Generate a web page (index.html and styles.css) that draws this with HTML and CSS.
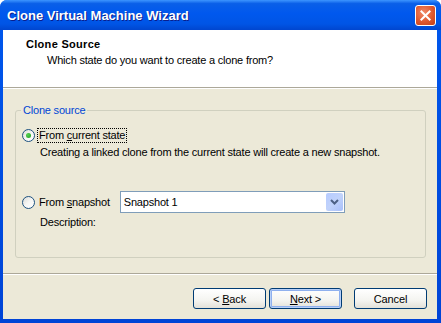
FILE: index.html
```html
<!DOCTYPE html>
<html lang="en">
<head>
    <meta charset="UTF-8">
    <title>Clone Virtual Machine Wizard</title>
    <link rel="stylesheet" href="styles.css">
</head>
<body>
    <div class="window">
        <div class="titlebar">
            <span class="title">Clone Virtual Machine Wizard</span>
            <span class="close-btn">
                <svg viewBox="0 0 21 21" width="21" height="21">
                    <path d="M6 6 L15 15 M15 6 L6 15" stroke="#fff" stroke-width="2.2" stroke-linecap="square"></path>
                </svg>
            </span>
        </div>
        <div class="client">
            <div class="header">
                <h1>Clone Source</h1>
                <p>Which state do you want to create a clone from?</p>
            </div>
            <div class="body">
                <fieldset class="group">
                    <legend>Clone source</legend>
                    <div class="option">
                        <span class="radio checked"></span>
                        <span class="label focused">From <u>c</u>urrent state</span>
                    </div>
                    <div class="hint">Creating a linked clone from the current state will create a new snapshot.</div>
                    <div class="option snap-row">
                        <span class="radio"></span>
                        <span class="label">From <u>s</u>napshot</span>
                        <div class="combo">
                            <span class="combo-text">Snapshot 1</span>
                            <span class="combo-btn">
                                <svg viewBox="0 0 9 6" width="9" height="6">
                                    <path d="M1 1 L4.5 4.5 L8 1" fill="none" stroke="#4D6185" stroke-width="2"></path>
                                </svg>
                            </span>
                        </div>
                    </div>
                    <div class="hint">Description:</div>
                </fieldset>
            </div>
            <div class="footer">
                <button class="btn">&lt; <u>B</u>ack</button>
                <button class="btn default"><u>N</u>ext &gt;</button>
                <button class="btn cancel">Cancel</button>
            </div>
        </div>
    </div>
</body>
</html>
```

FILE: styles.css
```css
* {
    margin: 0;
    padding: 0;
    box-sizing: border-box;
}

body {
    font-family: 'Liberation Sans', Arial, sans-serif;
    font-size: 11px;
    letter-spacing: -0.2px;
    color: #000;
    background: #fff;
}

.window {
    width: 441px;
    height: 323px;
    background: linear-gradient(180deg, #0058ee 0%, #0044d6 100%);
    border-radius: 7px 7px 0 0;
    padding: 0 4px 4px 3px;
    display: flex;
    flex-direction: column;
}

.titlebar {
    height: 30px;
    display: flex;
    align-items: center;
    justify-content: space-between;
    background: linear-gradient(180deg, #3d95ff 0%, #0a5fe8 12%, #0058ee 45%, #0055e5 80%, #0046cf 100%);
    margin: 0 -4px 0 -3px;
    padding-left: 7px;
    padding-right: 5px;
    border-radius: 7px 7px 0 0;
}

.title {
    color: #fff;
    font-weight: bold;
    font-size: 13px;
    letter-spacing: 0;
    text-shadow: 1px 1px 0 #0a1e8c;
    padding-top: 1px;
}

.close-btn {
    width: 21px;
    height: 21px;
    border: 1px solid #fff;
    border-radius: 3px;
    background: radial-gradient(circle at 40% 35%, #f08a6a 0%, #e0582e 55%, #c33e16 100%);
    display: flex;
    align-items: center;
    justify-content: center;
}

.close-btn svg {
    width: 19px;
    height: 19px;
}

.client {
    flex: 1;
    background: #ece9d8;
    display: flex;
    flex-direction: column;
}

.header {
    background: #fff;
    height: 58px;
    border-bottom: 1px solid #aca899;
    box-shadow: 0 1px 0 #fff;
    padding: 8px 0 0 23px;
}

.header h1 {
    font-size: 11px;
    font-weight: bold;
    letter-spacing: 0.3px;
    margin-bottom: 4px;
}

.header p {
    padding-left: 21px;
}

.body {
    padding: 16px 11px 0 12px;
    height: 186px;
    border-bottom: 1px solid #aca899;
    box-shadow: 0 1px 0 #fff;
}

.group {
    border: 1px solid #d0d0bf;
    border-radius: 3px;
    height: 154px;
    padding: 12px 0 0 6px;
}

.group legend {
    color: #0046d5;
    padding: 0 2px;
    margin-left: -1px;
}

.option {
    display: flex;
    align-items: center;
    height: 15px;
}

.radio {
    width: 13px;
    height: 13px;
    border: 1px solid #1c5180;
    border-radius: 50%;
    background: linear-gradient(135deg, #dcdcd6 0%, #f6f6f4 50%, #fff 100%);
    margin-right: 2px;
    position: relative;
}

.radio.checked::after {
    content: "";
    position: absolute;
    left: 3px;
    top: 3px;
    width: 5px;
    height: 5px;
    border-radius: 50%;
    background: radial-gradient(circle at 35% 35%, #55d051 0%, #21a121 100%);
}

.label {
    padding: 0 1px;
    line-height: 13px;
    border: 1px dotted transparent;
}

.label.focused {
    border-color: #000;
}

.hint {
    padding-left: 18px;
    margin-top: 3px;
}

.snap-row {
    margin-top: 33px;
    height: 22px;
}

.combo {
    margin-left: 8px;
    width: 225px;
    height: 22px;
    border: 1px solid #7f9db9;
    background: #fff;
    display: flex;
    align-items: center;
    justify-content: space-between;
    padding: 1px 1px 1px 3px;
}

.combo-btn {
    width: 17px;
    height: 18px;
    border-radius: 2px;
    background: linear-gradient(135deg, #b6cbff 0%, #c1d3fb 50%, #a8bffa 100%);
    display: flex;
    align-items: center;
    justify-content: center;
}

.footer {
    flex: 1;
    display: flex;
    justify-content: flex-end;
    align-items: flex-start;
    padding: 14px 10px 0 0;
}

.btn {
    font-family: inherit;
    font-size: 11px;
    letter-spacing: -0.15px;
    width: 73px;
    height: 21px;
    border: 1px solid #003c74;
    border-radius: 3px;
    background: linear-gradient(180deg, #ffffff 0%, #f4f4f0 60%, #e3e1d8 100%);
    color: #000;
    margin-left: 3px;
}

.btn.default {
    box-shadow: inset 0 0 0 1px #b8d0f8, inset 0 0 0 2px #8fb0ee;
}

.btn.cancel {
    margin-left: 12px;
}
```
